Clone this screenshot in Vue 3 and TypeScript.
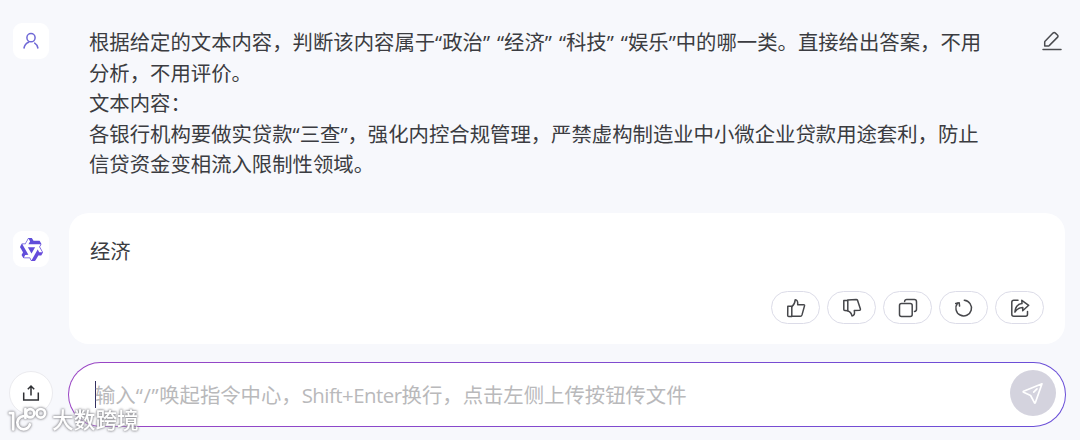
<script setup lang="ts">
const promptLines: string[] = [
  '根据给定的文本内容，判断该内容属于“政治” “经济” “科技” “娱乐”中的哪一类。直接给出答案，不用',
  '分析，不用评价。',
  '文本内容：',
  '各银行机构要做实贷款“三查”，强化内控合规管理，严禁虚构制造业中小微企业贷款用途套利，防止',
  '信贷资金变相流入限制性领域。',
]

interface Action {
  label: string
  paths: string[]
}

const actions: Action[] = [
  {
    label: '赞',
    paths: [
      'M1.8 8.2h4v10.2h-3.1q-1 0-1-1z',
      'M5.8 8.8Q9 6 9.2 1.7q2.9.1 2.5 5h5.9q1.2 0 .9 1.2l-2.5 9q-.4 1.3-1.7 1.4H5.8',
    ],
  },
  {
    label: '踩',
    paths: [
      'M1.8 2.4h4v10.4l-3-.4q-1-.1-1-1z',
      'M5.8 2.1l8.4-.7q1 0 1.4 1l2.8 8.6q.2 1-.8 1.2l-5.3.4q1 4.9-2.3 5.3-.9-4.2-4.2-4.9',
    ],
  },
  {
    label: '复制',
    paths: [
      'M3.5 5.6h8.7q2 0 2 2v8.8q0 2-2 2H3.5q-2 0-2-2V7.6q0-2 2-2z',
      'M6.6 3.5q.2-2 2.2-2h7.5q2.2 0 2.2 2.2v7.5q0 2-2 2.2',
    ],
  },
  {
    label: '重新生成',
    paths: ['M10.3 2.3a7.8 7.8 0 1 1-6.8 3', 'M1.7 5.6l3.5-.8.4 3.3'],
  },
  {
    label: '分享',
    paths: [
      'M8 2.2H3.8q-2 0-2 2v12q0 2 2 2h11.8q1.9 0 1.9-2v-2.8',
      'M11.8 2.3l6.9 5-6 5.4.1-3.2q-5.1-.1-7.9 4.6.5-7.5 7.1-8.5z',
    ],
  },
]
</script>

<template>
  <main class="chat">
    <section class="question">
      <div class="avatar">
        <svg class="user-icon" viewBox="0 0 18 18">
          <circle cx="9" cy="5.7" r="4.1" />
          <path d="M2 16q.8-4.1 4.6-5.7M12.7 11.1q2.6 1.6 3.2 4.9" />
        </svg>
      </div>
      <div class="prompt">
        <p v-for="line in promptLines" :key="line">{{ line }}</p>
      </div>
      <svg class="edit-icon" viewBox="0 0 20 20">
        <path d="M2.8 10.6L11 2.1q1.2-1.1 2.4 0l2 1.9q1.2 1.2 0 2.4L7.2 14.6q-.6.5-1.3.5H2.7v-3.3q0-.8.1-1.2z" />
        <path d="M1 18.6h18" />
      </svg>
    </section>

    <section class="answer">
      <div class="avatar">
        <svg class="logo" viewBox="0 0 24 24">
          <defs>
            <linearGradient id="logo-fill" x1="0" y1="0" x2="1" y2="1">
              <stop offset="0" stop-color="#5a50d8" />
              <stop offset="1" stop-color="#6a49dc" />
            </linearGradient>
          </defs>
          <path
            fill="url(#logo-fill)"
            d="M12.604 1.34c.393.69.784 1.382 1.174 2.075a.18.18 0 00.157.091h5.552c.174 0 .322.11.446.327l1.454 2.57c.19.337.24.478.024.837-.26.43-.513.864-.76 1.3l-.367.658c-.106.196-.223.28-.04.512l2.652 4.637c.172.301.111.494-.043.77-.437.785-.882 1.564-1.335 2.34-.159.272-.352.375-.68.37-.777-.016-1.552-.01-2.327.016a.099.099 0 00-.081.05 575.097 575.097 0 01-2.705 4.74c-.169.293-.38.363-.725.364-.997.003-2.002.004-3.017.002a.537.537 0 01-.465-.271l-1.335-2.323a.09.09 0 00-.083-.049H4.982c-.285.03-.553-.001-.805-.092l-1.603-2.77a.543.543 0 01-.002-.54l1.207-2.12a.198.198 0 000-.197 550.951 550.951 0 01-1.875-3.272l-.79-1.395c-.16-.31-.173-.496.095-.965.465-.813.927-1.625 1.387-2.436.132-.234.304-.334.584-.335a338.3 338.3 0 012.589-.001.124.124 0 00.107-.063l2.806-4.895a.488.488 0 01.422-.246c.524-.001 1.053 0 1.583-.006L11.704 1c.341-.003.724.032.9.34zm-3.432.403a.06.06 0 00-.052.03L6.254 6.788a.157.157 0 01-.135.078H3.253c-.056 0-.07.025-.041.074l5.81 10.156c.025.042.013.062-.034.063l-2.795.015a.218.218 0 00-.2.116l-1.32 2.31c-.044.078-.021.118.068.118l5.716.008c.046 0 .08.02.104.061l1.403 2.454c.046.081.092.082.139 0l5.006-8.76.783-1.382a.055.055 0 01.096 0l1.424 2.53a.122.122 0 00.107.062l2.763-.02a.04.04 0 00.035-.02.041.041 0 000-.04l-2.9-5.086a.108.108 0 010-.113l.293-.507 1.12-1.977c.024-.041.012-.062-.035-.062H9.2c-.059 0-.073-.026-.043-.077l1.434-2.505a.107.107 0 000-.114L9.225 1.774a.06.06 0 00-.053-.031zm6.29 8.02c.046 0 .058.02.034.06l-.832 1.465-2.613 4.585a.056.056 0 01-.05.029.058.058 0 01-.05-.029L8.498 9.841c-.02-.034-.01-.052.028-.054l.216-.012 6.722-.012z"
          />
        </svg>
      </div>
      <div class="card">
        <p class="reply">经济</p>
        <div class="actions">
          <button v-for="a in actions" :key="a.label" class="action" :aria-label="a.label">
            <svg viewBox="0 0 20 20"><path v-for="d in a.paths" :key="d" :d="d" /></svg>
          </button>
        </div>
      </div>
    </section>

    <section class="composer">
      <button class="upload" aria-label="上传">
        <svg viewBox="0 0 18 18">
          <path d="M1.7 8.5v7.6h14.6V8.5M9 11.6V2.4M5.8 5.2L9 2l3.2 3.2" />
        </svg>
      </button>
      <div class="field">
        <span class="caret"></span>
        <span class="placeholder">输入<span class="slash">“/”</span>唤起指令中心，<span class="keys">Shift+Enter</span>换行，点击左侧上传按钮传文件</span>
        <button class="send" aria-label="发送">
          <svg viewBox="0 0 22 22">
            <path d="M20 1.8L1.6 9.2q-.8.5 0 1l7 3.3 3.8 7.2q.5.8.9 0zM15 6.8l-3.3 3.4" />
          </svg>
        </button>
      </div>
    </section>

    <div class="watermark">
      <svg viewBox="0 0 42 28">
        <path d="M2.8 7.2h3.4v16.3" />
        <path d="M16.2 10.2q-5.4 1-5.9 6.3.3 6.4 6.4 6.8 4.6-.2 6.2-4.8" />
        <path d="M18.4 3v9" />
        <circle cx="23.2" cy="7.3" r="4.1" />
        <circle cx="33.8" cy="7.3" r="4.3" />
      </svg>
      <span>大数跨境</span>
    </div>
  </main>
</template>

<style>
body {
  margin: 0;
  background: #f7f8fc;
}
</style>

<style scoped>
.chat {
  position: relative;
  box-sizing: border-box;
  width: 1080px;
  height: 440px;
  overflow: hidden;
  background: #f7f8fc;
  color: #3b3c41;
  font-family: 'Open Sans', 'Noto Sans CJK SC', sans-serif;
  font-size: 20.37px;
  line-height: 30.5px;
}
p {
  margin: 0;
  white-space: nowrap;
}
button {
  display: flex;
  align-items: center;
  justify-content: center;
  box-sizing: border-box;
  padding: 0;
}
svg {
  display: block;
  flex: none;
  fill: none;
  stroke-linecap: round;
  stroke-linejoin: round;
}
.avatar {
  display: flex;
  align-items: center;
  justify-content: center;
  flex: none;
  width: 36px;
  height: 36px;
  border-radius: 9px;
  background: #fff;
}
.question {
  display: flex;
  align-items: flex-start;
  height: 213px;
  padding: 23px 18px 0 13px;
  box-sizing: border-box;
}
.user-icon {
  width: 18px;
  height: 18px;
  stroke: #6f68d6;
  stroke-width: 1.5;
}
.prompt {
  flex: 1;
  margin: 4px 0 0 40px;
  word-spacing: 1.7px;
}
.edit-icon {
  width: 20px;
  height: 20px;
  margin-top: 8px;
  stroke: #4b4c50;
  stroke-width: 1.5;
}
.answer {
  display: flex;
  height: 131px;
  padding-left: 13px;
}
.answer .avatar {
  margin-top: 18px;
}
.logo {
  width: 25px;
  height: 25px;
}
.card {
  display: flex;
  flex-direction: column;
  justify-content: space-between;
  box-sizing: border-box;
  width: 996px;
  margin-left: 20px;
  padding: 23px 21px 20px;
  border-radius: 20px;
  background: #fff;
}
.actions {
  display: flex;
  justify-content: flex-end;
  gap: 7px;
}
.action {
  width: 49px;
  height: 33px;
  border: 1px solid #dcdce8;
  border-radius: 17px;
  background: #fff;
}
.action svg {
  width: 20px;
  height: 20px;
  stroke: #46474b;
  stroke-width: 1.5;
}
.composer {
  display: flex;
  align-items: flex-start;
  padding: 18px 0 0 9px;
}
.upload {
  width: 44px;
  height: 44px;
  margin-top: 9px;
  border: 1px solid #ebebef;
  border-radius: 50%;
  background: #fff;
}
.upload svg {
  width: 18px;
  height: 18px;
  stroke: #2f3034;
  stroke-width: 1.5;
  stroke-linecap: butt;
  stroke-linejoin: miter;
}
.field {
  display: flex;
  align-items: center;
  box-sizing: border-box;
  width: 998px;
  height: 65px;
  margin-left: 15px;
  padding: 0 8px 0 25px;
  border: 1.5px solid transparent;
  border-radius: 33px;
  background:
    linear-gradient(#fff, #fff) padding-box,
    linear-gradient(90deg, #9a45c4, #6a4fd8) border-box;
}
.caret {
  width: 1px;
  height: 27px;
  margin-left: 1px;
  background: #34305f;
}
.placeholder {
  flex: 1;
  margin-left: -1px;
  padding-top: 2px;
  color: #b9b9bb;
  white-space: nowrap;
}
.slash {
  letter-spacing: 0.6px;
}
.keys {
  letter-spacing: -0.5px;
}
.send {
  width: 46px;
  height: 46px;
  margin: 0 1px 3px 0;
  border: 0;
  border-radius: 50%;
  background: #d4d3de;
}
.send svg {
  width: 22px;
  height: 22px;
  stroke: #fff;
  stroke-width: 1.7;
}
.watermark {
  position: absolute;
  left: 7px;
  top: 405px;
  display: flex;
  align-items: center;
  color: #fff;
  font-size: 21.7px;
  font-weight: 500;
  filter: drop-shadow(0 0 1px #88888d) drop-shadow(0 0 1px #b4b4b9);
}
.watermark svg {
  width: 42px;
  height: 28px;
  stroke: #fff;
  stroke-width: 2.7;
}
.watermark span {
  margin-left: 3px;
}
</style>
